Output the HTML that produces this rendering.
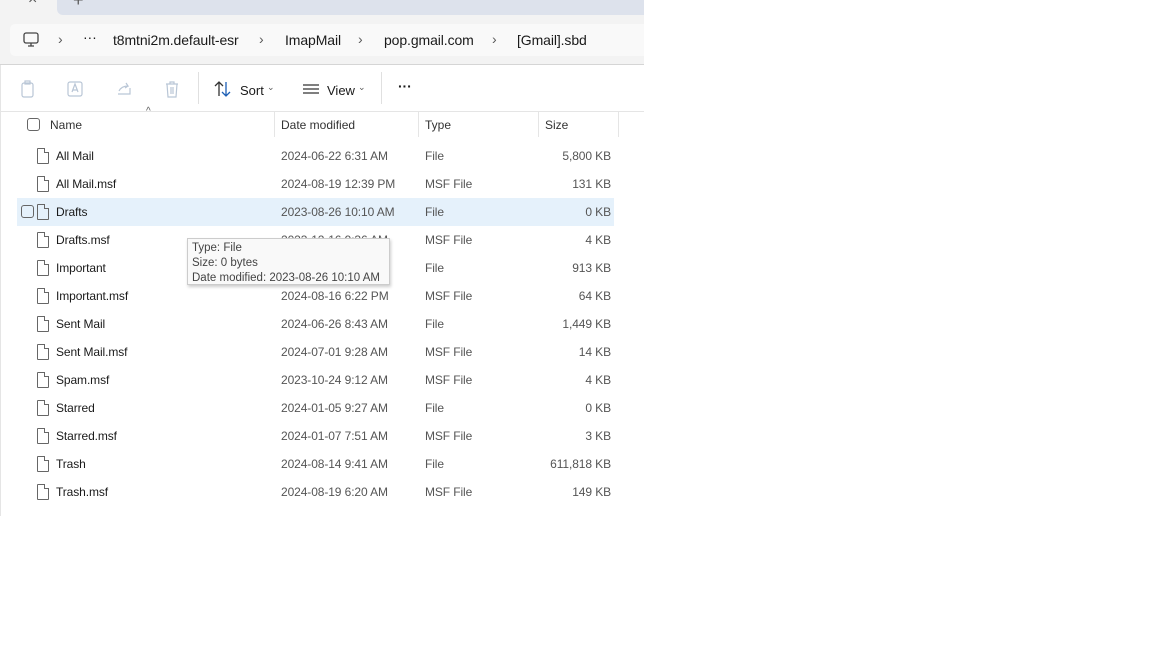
<!DOCTYPE html>
<html><head><style>
body{margin:0;width:1152px;height:648px;background:#fff;font-family:"Liberation Sans",sans-serif;position:relative;overflow:hidden}
.win{position:absolute;left:0;top:0;width:644px;height:516px;background:#fff;box-shadow:inset 1px 0 0 #e5e5e5}
.top{position:absolute;left:0;top:0;width:644px;height:64px;background:#f3f3f3;border-bottom:1px solid #d5d5d5}
.tab{position:absolute;left:57px;top:0;width:587px;height:15px;background:#dde2ec;border-bottom-left-radius:6px}
.bc{position:absolute;left:10px;top:24px;width:634px;height:32px;background:#f9f9f9;border-radius:5px 0 0 5px}
.t{position:absolute;font-size:14px;color:#1a1a1a;white-space:nowrap;letter-spacing:-0.1px}
.s{position:absolute;font-size:12px;color:#1a1a1a;white-space:nowrap}
.g{color:#5a5a5a}
.row{position:absolute;left:17px;width:597px;height:28px}
.fi{position:absolute;left:20px;top:6px;width:10px;height:14px;border:1px solid #666;border-radius:1px}
.fi:after{content:"";position:absolute;right:-1px;top:-1px;width:4px;height:4px;background:#fff;border-left:1px solid #666;border-bottom:1px solid #666}
.row[style*="e5f1fb"] .fi:after{background:#e5f1fb}
.cell{position:absolute;top:7px;font-size:12px;color:#1a1a1a;letter-spacing:-0.1px}
.cg{color:#555}
</style></head><body>
<div class="win">
<div class="top"><div class="tab"></div>
<div class="t g" style="left:28px;top:-9px;font-size:16px">×</div>
<div class="t g" style="left:73px;top:-10px;font-size:18px">+</div>
<div class="bc"></div>
<svg style="position:absolute;left:23px;top:32px" width="17" height="16"><rect x="1" y="1" width="14" height="10" rx="2" fill="none" stroke="#444" stroke-width="1.3"/><path d="M5 14h6M8 11v3" stroke="#444" stroke-width="1.3"/></svg>
<div class="t g" style="left:58px;top:31px">›</div>
<div class="t" style="left:83px;top:29px">···</div>
<div class="t" style="left:113px;top:32px">t8mtni2m.default-esr</div>
<div class="t g" style="left:259px;top:31px">›</div>
<div class="t" style="left:285px;top:32px">ImapMail</div>
<div class="t g" style="left:358px;top:31px">›</div>
<div class="t" style="left:384px;top:32px">pop.gmail.com</div>
<div class="t g" style="left:492px;top:31px">›</div>
<div class="t" style="left:517px;top:32px">[Gmail].sbd</div>
</div>
<svg style="position:absolute;left:20px;top:80px" width="170" height="18" stroke="#b9c6d6" fill="none" stroke-width="1.2"><rect x="2" y="3" width="11" height="14" rx="2"/><rect x="5" y="1" width="5" height="3"/><rect x="48" y="2" width="14" height="14" rx="2"/><path d="M52 12l3-8 3 8M53 10h4"/><path d="M98 14h12V8M99 11c2-4 5-5 9-5l-2-3M108 6l-3 2"/><path d="M146 4h12M150 4V2h4v2M147 4l1 13h8l1-13M151 7v7M153 7v7"/></svg>
<div style="position:absolute;left:198px;top:72px;width:1px;height:32px;background:#e0e0e0"></div>
<svg style="position:absolute;left:214px;top:81px" width="18" height="16" fill="none" stroke-width="1.3"><path d="M5 15V1M1 5l4-4 4 4" stroke="#333"/><path d="M12 1v14M8 11l4 4 4-4" stroke="#1d5fb5"/></svg>
<div class="s" style="left:240px;top:83px;font-size:13px">Sort</div>
<div class="s g" style="left:267px;top:82px;font-size:9px">⌄</div>
<svg style="position:absolute;left:302px;top:83px" width="18" height="12" stroke="#333" stroke-width="1.2"><path d="M1 2h16M1 6h16M1 10h16"/></svg>
<div class="s" style="left:327px;top:83px;font-size:13px">View</div>
<div class="s g" style="left:358px;top:82px;font-size:9px">⌄</div>
<div style="position:absolute;left:381px;top:72px;width:1px;height:32px;background:#e0e0e0"></div>
<div class="t" style="left:398px;top:78px;font-weight:bold">···</div>
<div style="position:absolute;left:0;top:111px;width:644px;height:1px;background:#e5e5e5"></div>
<div class="s g" style="left:146px;top:106px;font-size:10px">^</div>
<div style="position:absolute;left:27px;top:118px;width:11px;height:11px;border:1px solid #666;border-radius:3px"></div>
<div class="s" style="left:50px;top:118px;color:#333">Name</div>
<div style="position:absolute;left:274px;top:112px;width:1px;height:25px;background:#e5e5e5"></div>
<div class="s" style="left:281px;top:118px;color:#333">Date modified</div>
<div style="position:absolute;left:418px;top:112px;width:1px;height:25px;background:#e5e5e5"></div>
<div class="s" style="left:425px;top:118px;color:#333">Type</div>
<div style="position:absolute;left:538px;top:112px;width:1px;height:25px;background:#e5e5e5"></div>
<div class="s" style="left:545px;top:118px;color:#333">Size</div>
<div style="position:absolute;left:618px;top:112px;width:1px;height:25px;background:#e5e5e5"></div>

<div class="row" style="top:142px"><div class="fi"></div><div class="cell" style="left:39px">All Mail</div><div class="cell cg" style="left:264px">2024-06-22 6:31 AM</div><div class="cell cg" style="left:408px">File</div><div class="cell cg" style="right:3px">5,800 KB</div></div>
<div class="row" style="top:170px"><div class="fi"></div><div class="cell" style="left:39px">All Mail.msf</div><div class="cell cg" style="left:264px">2024-08-19 12:39 PM</div><div class="cell cg" style="left:408px">MSF File</div><div class="cell cg" style="right:3px">131 KB</div></div>
<div class="row" style="top:198px;background:#e5f1fb"><div style="position:absolute;left:4px;top:7px;width:11px;height:11px;border:1px solid #666;border-radius:3px"></div><div class="fi"></div><div class="cell" style="left:39px">Drafts</div><div class="cell cg" style="left:264px">2023-08-26 10:10 AM</div><div class="cell cg" style="left:408px">File</div><div class="cell cg" style="right:3px">0 KB</div></div>
<div class="row" style="top:226px"><div class="fi"></div><div class="cell" style="left:39px">Drafts.msf</div><div class="cell cg" style="left:264px">2023-12-16 9:36 AM</div><div class="cell cg" style="left:408px">MSF File</div><div class="cell cg" style="right:3px">4 KB</div></div>
<div class="row" style="top:254px"><div class="fi"></div><div class="cell" style="left:39px">Important</div><div class="cell cg" style="left:408px">File</div><div class="cell cg" style="right:3px">913 KB</div></div>
<div class="row" style="top:282px"><div class="fi"></div><div class="cell" style="left:39px">Important.msf</div><div class="cell cg" style="left:264px">2024-08-16 6:22 PM</div><div class="cell cg" style="left:408px">MSF File</div><div class="cell cg" style="right:3px">64 KB</div></div>
<div class="row" style="top:310px"><div class="fi"></div><div class="cell" style="left:39px">Sent Mail</div><div class="cell cg" style="left:264px">2024-06-26 8:43 AM</div><div class="cell cg" style="left:408px">File</div><div class="cell cg" style="right:3px">1,449 KB</div></div>
<div class="row" style="top:338px"><div class="fi"></div><div class="cell" style="left:39px">Sent Mail.msf</div><div class="cell cg" style="left:264px">2024-07-01 9:28 AM</div><div class="cell cg" style="left:408px">MSF File</div><div class="cell cg" style="right:3px">14 KB</div></div>
<div class="row" style="top:366px"><div class="fi"></div><div class="cell" style="left:39px">Spam.msf</div><div class="cell cg" style="left:264px">2023-10-24 9:12 AM</div><div class="cell cg" style="left:408px">MSF File</div><div class="cell cg" style="right:3px">4 KB</div></div>
<div class="row" style="top:394px"><div class="fi"></div><div class="cell" style="left:39px">Starred</div><div class="cell cg" style="left:264px">2024-01-05 9:27 AM</div><div class="cell cg" style="left:408px">File</div><div class="cell cg" style="right:3px">0 KB</div></div>
<div class="row" style="top:422px"><div class="fi"></div><div class="cell" style="left:39px">Starred.msf</div><div class="cell cg" style="left:264px">2024-01-07 7:51 AM</div><div class="cell cg" style="left:408px">MSF File</div><div class="cell cg" style="right:3px">3 KB</div></div>
<div class="row" style="top:450px"><div class="fi"></div><div class="cell" style="left:39px">Trash</div><div class="cell cg" style="left:264px">2024-08-14 9:41 AM</div><div class="cell cg" style="left:408px">File</div><div class="cell cg" style="right:3px">611,818 KB</div></div>
<div class="row" style="top:478px"><div class="fi"></div><div class="cell" style="left:39px">Trash.msf</div><div class="cell cg" style="left:264px">2024-08-19 6:20 AM</div><div class="cell cg" style="left:408px">MSF File</div><div class="cell cg" style="right:3px">149 KB</div></div>

<div style="position:absolute;left:187px;top:238px;height:47px;background:#f9f9f9;border:1px solid #ccc;box-shadow:1px 2px 3px rgba(0,0,0,.2);font-size:11.5px;color:#444;line-height:15px;padding:2px 0 0 4px;box-sizing:border-box;width:203px;white-space:nowrap">Type: File<br>Size: 0 bytes<br>Date modified: 2023-08-26 10:10 AM</div>
</div>
</body></html>
